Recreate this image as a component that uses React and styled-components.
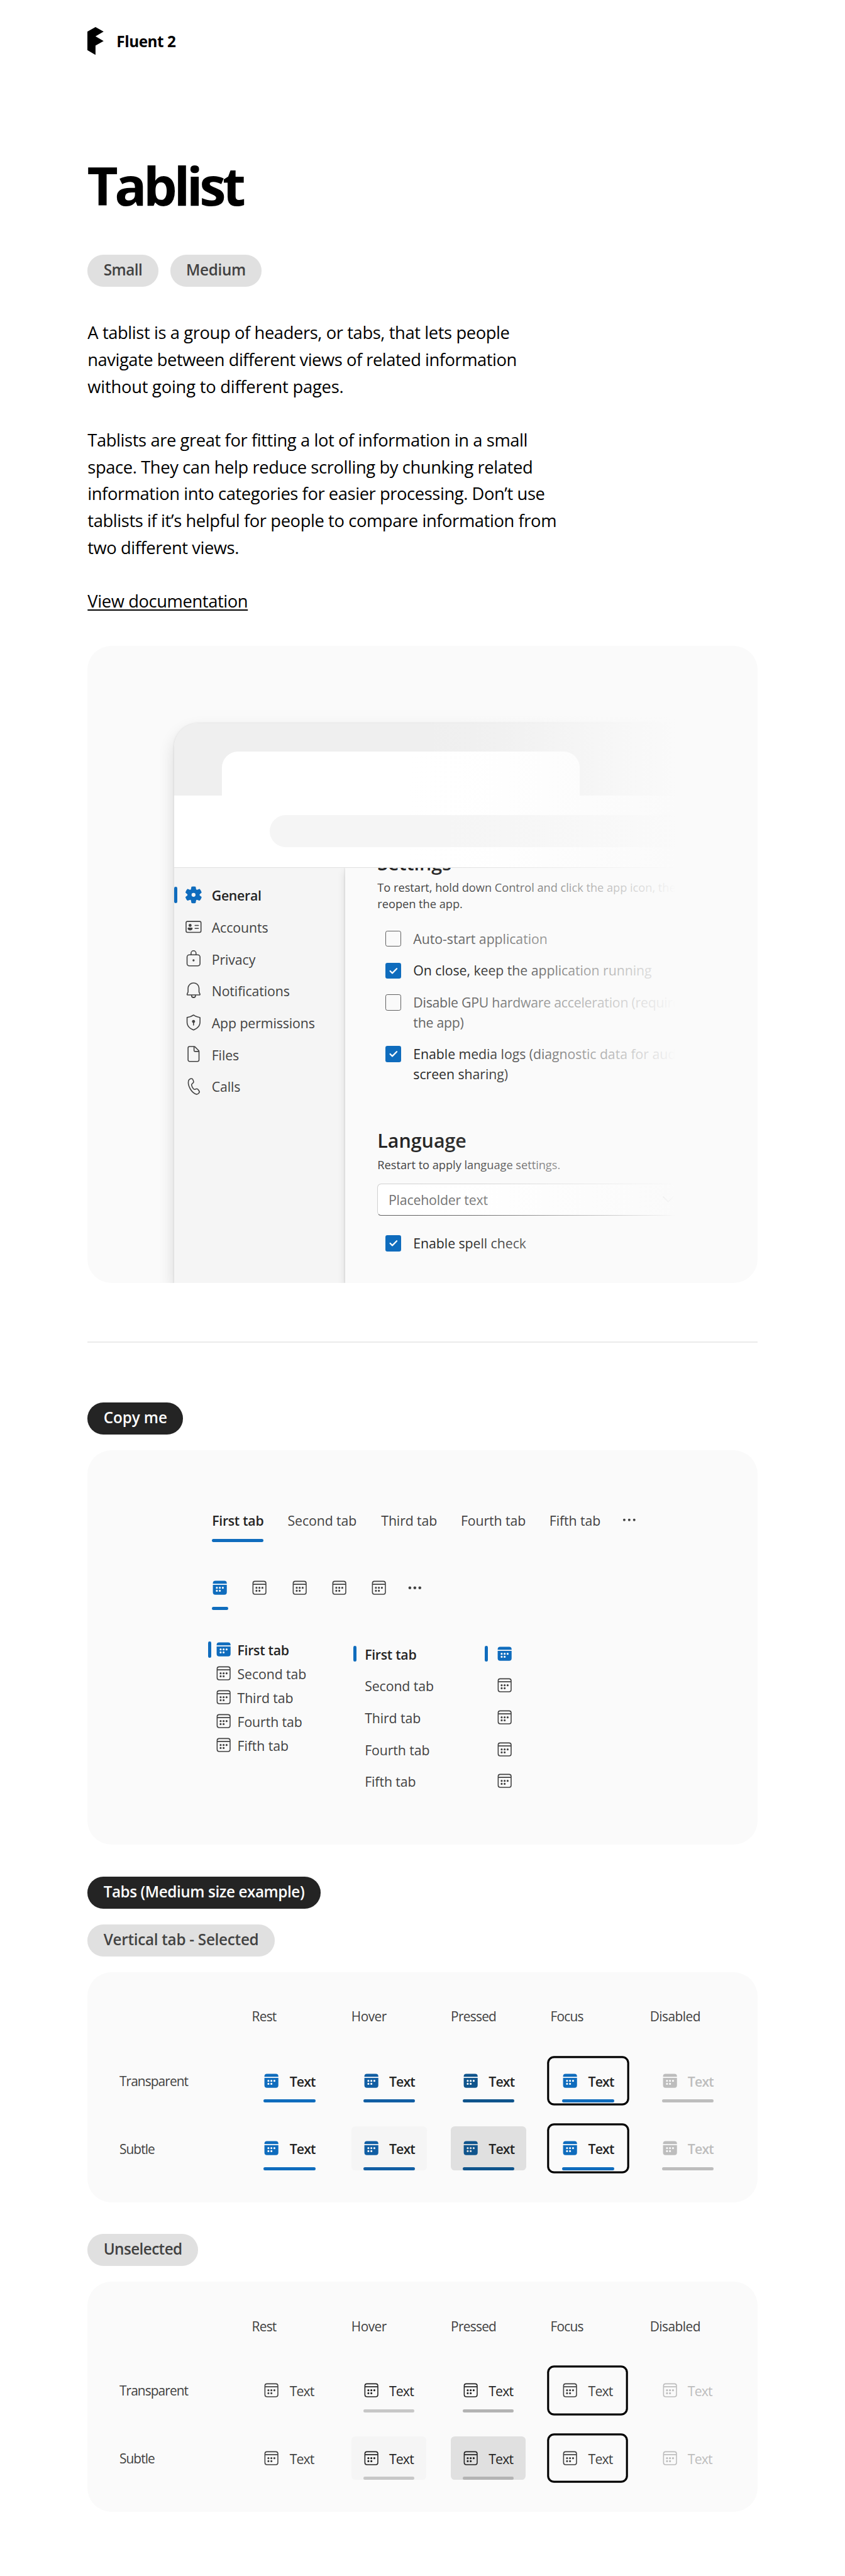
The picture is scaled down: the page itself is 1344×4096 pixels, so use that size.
import React from "react";
import styled, { createGlobalStyle, css } from "styled-components";

const SCALE = 1344 / 1698;
const u = (...n) => n.map((v) => `${+(v * SCALE).toFixed(3)}px`).join(" ");

const color = {
  brand: "#0f6cbd",
  brandHover: "#115ea3",
  brandPressed: "#0f548c",
  ink: "#242424",
  ink2: "#424242",
  ink3: "#616161",
  placeholder: "#707070",
  disabled: "#bdbdbd",
  canvas: "#fafafa",
  subtle: "#f5f5f5",
  pressed: "#e0e0e0",
};

const GlobalStyle = createGlobalStyle`
  *, *::before, *::after { box-sizing: border-box; }
  body {
    margin: 0;
    background: #fff;
    font-family: "Open Sans", "Noto Sans", sans-serif;
    color: #000;
  }
  h1, h2, p { margin: 0; }
  svg { display: block; flex: none; }
`;

const Page = styled.main`
  width: 1344px;
  height: 4096px;
  padding: ${u(54, 176, 0)};
  display: flex;
  flex-direction: column;
  align-items: flex-start;
  overflow: hidden;
`;

/* ---------- Header and introduction ---------- */

const Brand = styled.header`
  display: flex;
  align-items: center;
  gap: ${u(25.5)};
  height: ${u(56)};
`;

const BrandName = styled.span`
  padding-top: ${u(2)};
  font-size: ${u(30.7)};
  line-height: ${u(40)};
  font-weight: 700;
  letter-spacing: -0.018em;
`;

const Title = styled.h1`
  margin: ${u(202.3, 0, 79.7, -1)};
  font-size: ${u(107.5)};
  line-height: ${u(120)};
  font-weight: 700;
  letter-spacing: -0.065em;
`;

const PillRow = styled.div`
  display: flex;
  gap: ${u(24)};
  margin-bottom: ${u(65.9)};
`;

const Pill = styled.span`
  height: ${u(64)};
  padding: ${u(0, 32)};
  margin-top: ${(p) => u(p.$top ?? 0)};
  border-radius: ${u(32)};
  background: ${(p) => (p.$dark ? color.ink : color.pressed)};
  color: ${(p) => (p.$dark ? "#fff" : color.ink2)};
  font-size: ${u(30.7)};
  line-height: ${u(60)};
  font-weight: 600;
  letter-spacing: ${(p) => p.$track}em;
  white-space: nowrap;
`;

const Intro = styled.div`
  display: flex;
  flex-direction: column;
  align-items: flex-start;
  gap: ${u(54)};
  font-size: ${u(34.56)};
  line-height: ${u(54)};
  letter-spacing: -0.0147em;
  white-space: nowrap;
`;

const Line = styled.span`
  display: block;
  letter-spacing: ${(p) => p.$track ?? -0.0147}em;
`;

const DocLink = styled.a`
  color: #000;
  text-decoration: underline;
  text-decoration-thickness: ${u(2.4)};
  text-underline-offset: ${u(4)};
  text-decoration-skip-ink: none;
`;

/* ---------- Hero illustration ---------- */

const Card = styled.section`
  width: ${u(1346)};
  height: ${(p) => u(p.$height)};
  margin-top: ${(p) => u(p.$top)};
  border-radius: ${u(48)};
  background: ${color.canvas};
  flex: none;
`;

const Hero = styled(Card)`
  position: relative;
  display: flex;
  padding: ${u(155.5, 0, 0, 174)};
  overflow: hidden;
`;

const BrowserWindow = styled.div`
  width: ${u(1006)};
  display: flex;
  flex-direction: column;
  border-radius: ${u(48)} 0 0 0;
  overflow: hidden;
  box-shadow: 0 ${u(16)} ${u(32)} rgba(0, 0, 0, 0.14), 0 0 ${u(4)} rgba(0, 0, 0, 0.12);
`;

const FadeOut = styled.div`
  position: absolute;
  top: 0;
  bottom: 0;
  left: ${u(644)};
  width: ${u(616)};
  background: linear-gradient(
    to right,
    rgba(250, 250, 250, 0) 0,
    rgba(250, 250, 250, 0.07) ${u(120)},
    rgba(250, 250, 250, 0.22) ${u(206)},
    rgba(250, 250, 250, 0.48) ${u(310)},
    rgba(250, 250, 250, 0.64) ${u(380)},
    rgba(250, 250, 250, 0.8) ${u(455)},
    rgba(250, 250, 250, 0.92) ${u(510)},
    rgb(250, 250, 250) ${u(538)}
  );
`;

const TitleBar = styled.div`
  height: ${u(144.5)};
  padding: ${u(56.5, 0, 0, 96)};
  background: #efefef;
`;

const BrowserTab = styled.div`
  width: ${u(719.5)};
  height: 100%;
  border-radius: ${u(32, 32)} 0 0;
  background: #fff;
`;

const AddressBar = styled.div`
  height: ${u(146)};
  padding: ${u(40, 0, 0, 192)};
  background: #fff;
  border-bottom: ${u(2)} solid #e0e0e0;
`;

const AddressField = styled.div`
  height: ${u(64)};
  border-radius: ${u(32)} 0 0 ${u(32)};
  background: ${color.subtle};
`;

const WindowBody = styled.div`
  flex: 1;
  min-height: 0;
  display: flex;
  overflow: hidden;
`;

const Sidebar = styled.nav`
  width: ${u(343.5)};
  flex: none;
  padding-top: ${u(22)};
  background: ${color.subtle};
`;

const NavItem = styled.div`
  height: ${u(64)};
  display: flex;
  align-items: center;
  color: ${color.ink2};
`;

const SideMark = styled.span`
  width: ${u(6)};
  height: ${u(32)};
  flex: none;
  border-radius: ${u(3)};
  background: ${(p) => (p.$on ? color.brand : "transparent")};
`;

const NavIcon = styled.span`
  margin: ${u(0, 16, 0, 13.5)};
  color: ${(p) => (p.$on ? color.brand : color.ink2)};
`;

const Label = styled.span`
  padding-top: ${u(3)};
  font-size: ${u(26.88)};
  line-height: ${u(40)};
  white-space: nowrap;
  ${(p) =>
    p.$strong
      ? css`
          font-weight: 600;
          letter-spacing: -0.013em;
          color: ${color.ink};
        `
      : css`
          letter-spacing: -0.004em;
          color: ${color.ink2};
        `}
`;

const SettingsPane = styled.div`
  position: relative;
  flex: 1;
  min-width: 0;
  padding-left: ${u(65)};
  background: ${color.canvas};
  box-shadow: 0 0 ${u(4)} rgba(0, 0, 0, 0.14), 0 ${u(8)} ${u(16)} rgba(0, 0, 0, 0.12);
  white-space: nowrap;
`;

const Heading = styled.h2`
  margin: ${(p) => u(p.$top, 0, 4.9)};
  font-size: ${u(38.4)};
  line-height: ${u(56)};
  font-weight: 600;
  color: ${color.ink};
`;

const Caption = styled.p`
  font-size: ${u(23.04)};
  line-height: ${u(32)};
  letter-spacing: -0.001em;
  color: ${color.ink2};
`;

const CheckList = styled.div`
  display: flex;
  flex-direction: column;
  gap: ${u(24)};
  margin: ${(p) => u(p.$top, 0, 0, 16)};
`;

const CheckRow = styled.div`
  display: flex;
  align-items: flex-start;
  gap: ${u(24)};
  font-size: ${u(26.88)};
  line-height: ${u(40)};
  letter-spacing: ${(p) => p.$track ?? -0.002}em;
  color: ${(p) => (p.$checked ? color.ink : color.ink3)};
`;

const CheckBox = styled.span`
  width: ${u(32)};
  height: ${u(32)};
  flex: none;
  margin-top: ${u(4)};
  border-radius: ${u(4)};
  ${(p) =>
    p.$checked
      ? css`
          background: ${color.brand};
        `
      : css`
          border: ${u(2)} solid ${color.ink3};
        `}
`;

const Dropdown = styled.div`
  width: ${u(640)};
  height: ${u(64)};
  margin-top: ${u(21.2)};
  padding: ${u(0, 35, 0, 21)};
  display: flex;
  align-items: center;
  justify-content: space-between;
  border: ${u(2)} solid #d1d1d1;
  border-bottom-color: ${color.ink3};
  border-radius: ${u(8)};
  background: #fff;
  font-size: ${u(26.88)};
  letter-spacing: -0.008em;
  color: ${color.placeholder};
`;

const Divider = styled.hr`
  width: ${u(1346)};
  height: 2px;
  margin: ${u(117.5, 0, 0)};
  border: 0;
  flex: none;
  background: #ebebeb;
`;

/* ---------- Tablist samples ---------- */

const Samples = styled(Card)`
  padding: ${u(121.2, 0, 0, 250)};
`;

const TabRow = styled.div`
  display: flex;
  align-items: flex-start;
  gap: ${u(48)};
  margin-top: ${(p) => u(p.$top ?? 0)};
`;

const HTab = styled.div`
  width: ${(p) => u(p.$width)};
  display: flex;
  flex-direction: column;
  align-items: stretch;
  gap: ${(p) => u(p.$gap)};
`;

const TabLabel = styled(Label)`
  padding-top: 0;
`;

const UnderMark = styled.span`
  height: ${u(6)};
  border-radius: ${u(3)};
  background: ${(p) => p.$fill ?? "transparent"};
`;

const Overflow = styled.span`
  margin: ${(p) => u(p.$shift, 0, 0, -12)};
  color: ${color.ink2};
`;

const VerticalLists = styled.div`
  display: grid;
  grid-template-columns: ${u(292, 264)} auto;
  align-items: start;
  margin: ${u(56, 0, 0, -8)};
`;

const VTab = styled.div`
  height: ${(p) => u(p.$height)};
  display: flex;
  align-items: center;
`;

const VIcon = styled.span`
  margin-left: ${(p) => u(p.$gap)};
  color: ${(p) => (p.$on ? color.brand : color.ink2)};
`;

const VLabel = styled(Label)`
  margin-left: ${(p) => u(p.$gap)};
`;

/* ---------- State matrices ---------- */

const Matrix = styled(Card)`
  display: grid;
  grid-template-columns: ${u(266, 200, 200, 200, 200, 200)};
  grid-template-rows: ${u(104, 136, 136)};
  padding: ${u(70, 0, 0, 64)};
`;

const MatrixText = styled.span`
  font-size: ${u(26.4)};
  line-height: ${u(40)};
  letter-spacing: ${(p) => p.$track ?? -0.035}em;
  color: ${color.ink2};
`;

const RowName = styled(MatrixText)`
  height: ${u(88)};
  padding-top: ${u(25.7)};
  letter-spacing: -0.044em;
`;

const StateTab = styled.div`
  width: ${(p) => u(p.$selected ? 152 : 150)};
  height: ${u(88)};
  padding: ${u(6, 24, 0)};
  display: flex;
  flex-direction: column;
  border-radius: ${u(8)};
  background: ${(p) => p.$bg};
  color: ${(p) => p.$text};
  ${(p) =>
    p.$focus &&
    css`
      box-shadow: 0 0 0 ${u(2)} #fff, 0 0 0 ${u(6)} #000;
    `}
`;

const StateContent = styled.div`
  flex: 1;
  display: flex;
  align-items: center;
  gap: ${u(20)};
`;

const StateIcon = styled.span`
  color: ${(p) => p.$color};
`;

const StateLabel = styled.span`
  padding-top: ${u(3)};
  font-size: ${u(26.88)};
  line-height: ${u(40)};
  font-weight: ${(p) => (p.$selected ? 600 : 400)};
  letter-spacing: -0.04em;
`;

/* ---------- Icons ---------- */

const Svg = ({ size = 40, box = "0 0 20 20", children, ...rest }) => (
  <svg width={size * SCALE} height={size * SCALE} viewBox={box} fill="currentColor" {...rest}>
    {children}
  </svg>
);

const Logo = () => (
  <svg width={32.6 * SCALE} height={56 * SCALE} viewBox="0 0 32.6 56">
    <path d="M0 9.3 16.3 0l16.3 9.3-16.3 9.3L32.6 28l-16.3 9.3V56L0 46.6Z" />
  </svg>
);

const calendarDots =
  "M8 10a1 1 0 1 1-2 0 1 1 0 0 1 2 0ZM11 10a1 1 0 1 1-2 0 1 1 0 0 1 2 0ZM14 10a1 1 0 1 1-2 0 1 1 0 0 1 2 0ZM8 13a1 1 0 1 1-2 0 1 1 0 0 1 2 0ZM11 13a1 1 0 1 1-2 0 1 1 0 0 1 2 0Z";

const Calendar = ({ filled }) => (
  <Svg size={32} box="2 2 16 16">
    {filled ? (
      <path
        fillRule="evenodd"
        d={`M3 7h14v7.5a2.5 2.5 0 0 1-2.5 2.5h-9A2.5 2.5 0 0 1 3 14.5V7ZM5.5 3h9A2.5 2.5 0 0 1 17 5.5V6H3v-.5A2.5 2.5 0 0 1 5.5 3Z${calendarDots}`}
      />
    ) : (
      <>
        <path d={calendarDots} />
        <path
          fillRule="evenodd"
          d="M17 5.5A2.5 2.5 0 0 0 14.5 3h-9A2.5 2.5 0 0 0 3 5.5v9A2.5 2.5 0 0 0 5.5 17h9a2.5 2.5 0 0 0 2.5-2.5v-9ZM4 7h12v7.5c0 .83-.67 1.5-1.5 1.5h-9A1.5 1.5 0 0 1 4 14.5V7Zm1.5-3h9c.83 0 1.5.67 1.5 1.5V6H4v-.5C4 4.67 4.67 4 5.5 4Z"
        />
      </>
    )}
  </Svg>
);

const More = ({ r = 1.25 }) => (
  <Svg>
    <circle cx="5" cy="10" r={r} />
    <circle cx="10" cy="10" r={r} />
    <circle cx="15" cy="10" r={r} />
  </Svg>
);

const icons = {
  gear: (
    <path
      fillRule="evenodd"
      d="M1.91 7.38A8.5 8.5 0 0 1 3.69 4.3a.5.5 0 0 1 .54-.13l1.92.68a1 1 0 0 0 1.32-.76l.36-2a.5.5 0 0 1 .4-.4 8.53 8.53 0 0 1 3.55 0c.2.04.35.2.38.4l.37 2a1 1 0 0 0 1.32.76l1.92-.68a.5.5 0 0 1 .54.13 8.5 8.5 0 0 1 1.78 3.08c.06.2 0 .4-.15.54l-1.56 1.32a1 1 0 0 0 0 1.52l1.56 1.32a.5.5 0 0 1 .15.54 8.5 8.5 0 0 1-1.78 3.08.5.5 0 0 1-.54.13l-1.92-.68a1 1 0 0 0-1.32.76l-.37 2a.5.5 0 0 1-.38.4 8.53 8.53 0 0 1-3.56 0 .5.5 0 0 1-.39-.4l-.36-2a1 1 0 0 0-1.32-.76l-1.92.68a.5.5 0 0 1-.54-.13 8.5 8.5 0 0 1-1.78-3.08.5.5 0 0 1 .15-.54l1.56-1.32a1 1 0 0 0 0-1.52L2.06 7.92a.5.5 0 0 1-.15-.54ZM8 10a2 2 0 1 0 4 0 2 2 0 0 0-4 0Z"
    />
  ),
  card: (
    <>
      <rect x="2.5" y="4.5" width="15" height="11" rx="1.4" fill="none" stroke="currentColor" />
      <circle cx="6.55" cy="8.5" r="1.5" />
      <path d="M4.9 10.8h3.3c.45 0 .8.35.8.8 0 1.2-1 1.95-2.45 1.95S4.1 12.8 4.1 11.6c0-.45.35-.8.8-.8Z" />
      <path d="M11.5 8.5h3.4M11.5 11.5h3.4" stroke="currentColor" strokeLinecap="round" />
    </>
  ),
  lock: (
    <>
      <rect x="3.5" y="6.5" width="13" height="11" rx="2.2" fill="none" stroke="currentColor" />
      <path d="M7.5 6.3V4.9a2.5 2.5 0 0 1 5 0v1.4" fill="none" stroke="currentColor" />
      <circle cx="10" cy="12" r="1.05" />
    </>
  ),
  bell: (
    <path
      fillRule="evenodd"
      d="M10 2a5.92 5.92 0 0 1 5.98 5.36l.02.22V11.4l.92 2.22a1 1 0 0 1 .06.17l.01.08.01.13a1 1 0 0 1-.75.97l-.11.02L16 15h-3.5v.17a2.5 2.5 0 0 1-5 0V15H4a1 1 0 0 1-.26-.03l-.13-.04a1 1 0 0 1-.6-1.05l.02-.13.05-.13L4 11.4V7.57A5.9 5.9 0 0 1 10 2Zm1.5 13h-3v.15a1.5 1.5 0 0 0 1.36 1.34l.14.01c.78 0 1.42-.6 1.5-1.36V15ZM10 3a4.9 4.9 0 0 0-4.98 4.38L5 7.6v3.9l-.04.2L4 14h12l-.96-2.3-.04-.2V7.61A4.9 4.9 0 0 0 10 3Z"
    />
  ),
  shield: (
    <>
      <path
        fillRule="evenodd"
        d="M9.72 2.08a.5.5 0 0 1 .56 0c1.94 1.3 4.03 2.1 6.3 2.43A.5.5 0 0 1 17 5v4.5c0 3.9-2.3 6.73-6.82 8.47a.5.5 0 0 1-.36 0C5.31 16.23 3 13.39 3 9.5V5a.5.5 0 0 1 .43-.5 15.05 15.05 0 0 0 6.3-2.42ZM10 3.1a15.92 15.92 0 0 1-6 2.34V9.5c0 3.4 1.97 5.86 6 7.46 4.03-1.6 6-4.07 6-7.46V5.43a15.92 15.92 0 0 1-6-2.34Z"
      />
      <circle cx="10" cy="9" r="1.5" />
      <path d="M10 9.5v3.1" stroke="currentColor" strokeLinecap="round" />
    </>
  ),
  file: (
    <path
      fillRule="evenodd"
      d="M6 2a2 2 0 0 0-2 2v12c0 1.1.9 2 2 2h8a2 2 0 0 0 2-2V7.41c0-.4-.16-.78-.44-1.06l-3.91-3.91A1.5 1.5 0 0 0 10.59 2H6ZM5 4a1 1 0 0 1 1-1h4v3.5c0 .83.67 1.5 1.5 1.5H15v8a1 1 0 0 1-1 1H6a1 1 0 0 1-1-1V4Zm9.8 3h-3.3a.5.5 0 0 1-.5-.5V3.2L14.8 7Z"
    />
  ),
  call: (
    <path
      fill="none"
      stroke="currentColor"
      strokeLinejoin="round"
      d="m6.6 2.8.6-.18a1.75 1.75 0 0 1 2.15.98l.6 1.42a1.7 1.7 0 0 1-.42 1.9L8.3 8.06c-.2.2-.32.48-.28.76.1.84.4 1.72.92 2.62.46.8.94 1.36 1.5 1.82.2.16.46.2.7.13l1.55-.5a1.7 1.7 0 0 1 1.9.66l.92 1.28a1.75 1.75 0 0 1-.22 2.28l-.44.42c-.66.62-1.6.84-2.46.56-2.12-.7-4.1-2.46-5.74-5.3C5.02 9.94 4.42 7.4 4.86 5.16A3 3 0 0 1 6.6 2.8Z"
    />
  ),
};

const CheckMark = () => (
  <Svg size={32} box="0 0 32 32">
    <path d="m9.6 16.4 4.3 4.3 8.9-9" fill="none" stroke="#fff" strokeWidth="2.8" strokeLinecap="round" strokeLinejoin="round" />
  </Svg>
);

/* ---------- Data ---------- */

const navItems = [
  ["General", "gear"],
  ["Accounts", "card"],
  ["Privacy", "lock"],
  ["Notifications", "bell"],
  ["App permissions", "shield"],
  ["Files", "file"],
  ["Calls", "call"],
];

const tabs = [
  ["First tab", 104],
  ["Second tab", 140],
  ["Third tab", 112],
  ["Fourth tab", 130],
  ["Fifth tab", 104],
];

const states = [
  { name: "Rest", mark: color.brand, idleMark: "transparent", text: color.ink2 },
  { name: "Hover", mark: color.brandHover, idleMark: "#c7c7c7", text: color.ink, bg: color.subtle },
  { name: "Pressed", mark: color.brandPressed, idleMark: "#b3b3b3", text: color.ink, bg: color.pressed },
  { name: "Focus", mark: color.brand, idleMark: "transparent", text: color.ink2, focus: true },
  { name: "Disabled", mark: color.disabled, idleMark: "transparent", text: color.disabled, disabled: true },
];

/* ---------- Sections ---------- */

const Check = ({ checked, track, children }) => (
  <CheckRow $checked={checked} $track={track}>
    <CheckBox $checked={checked}>{checked && <CheckMark />}</CheckBox>
    <span>{children}</span>
  </CheckRow>
);

const HeroCard = () => (
  <Hero $top={62.1} $height={1280}>
    <BrowserWindow>
      <TitleBar>
        <BrowserTab />
      </TitleBar>
      <AddressBar>
        <AddressField />
      </AddressBar>
      <WindowBody>
        <Sidebar>
          {navItems.map(([label, icon], i) => (
            <NavItem key={label}>
              <SideMark $on={i === 0} />
              <NavIcon $on={i === 0}>
                <Svg>{icons[icon]}</Svg>
              </NavIcon>
              <Label $strong={i === 0}>{label}</Label>
            </NavItem>
          ))}
        </Sidebar>
        <SettingsPane>
          <Heading $top={-36.6}>Settings</Heading>
          <Caption>
            To restart, hold down Control and click the app icon, then
            <br />
            reopen the app.
          </Caption>
          <CheckList $top={33.6}>
            <Check>Auto-start application</Check>
            <Check checked>On close, keep the application running</Check>
            <Check track={-0.011}>
              Disable GPU hardware acceleration (requires
              <br />
              the app)
            </Check>
            <Check checked>
              Enable media logs (diagnostic data for audio
              <br />
              screen sharing)
            </Check>
          </CheckList>
          <Heading $top={86}>Language</Heading>
          <Caption>Restart to apply language settings.</Caption>
          <Dropdown>
            Placeholder text
            <Svg>
              <path d="m5 7.6 5 5 5-5" fill="none" stroke={color.ink3} strokeLinecap="round" strokeLinejoin="round" />
            </Svg>
          </Dropdown>
          <CheckList $top={36}>
            <Check checked>Enable spell check</Check>
          </CheckList>
        </SettingsPane>
      </WindowBody>
    </BrowserWindow>
    <FadeOut />
  </Hero>
);

const SampleCard = () => (
  <Samples $top={32} $height={792}>
    <TabRow>
      {tabs.map(([label, width], i) => (
        <HTab key={label} $width={width} $gap={16.8}>
          <TabLabel $strong={i === 0}>{label}</TabLabel>
          <UnderMark $fill={i === 0 ? color.brand : undefined} />
        </HTab>
      ))}
      <Overflow $shift={-1}>
        <More />
      </Overflow>
    </TabRow>
    <TabRow $top={76}>
      {tabs.map(([label], i) => (
        <HTab key={label} $width={32} $gap={22}>
          <VIcon $gap={0} $on={i === 0}>
            <Calendar filled={i === 0} />
          </VIcon>
          <UnderMark $fill={i === 0 ? color.brand : undefined} />
        </HTab>
      ))}
      <Overflow $shift={-4}>
        <More r={1.45} />
      </Overflow>
    </TabRow>
    <VerticalLists>
      <div>
        {tabs.map(([label], i) => (
          <VTab key={label} $height={48}>
            <SideMark $on={i === 0} />
            <VIcon $gap={10} $on={i === 0}>
              <Calendar filled={i === 0} />
            </VIcon>
            <VLabel $gap={11} $strong={i === 0}>
              {label}
            </VLabel>
          </VTab>
        ))}
      </div>
      <div>
        {tabs.map(([label], i) => (
          <VTab key={label} $height={64}>
            <SideMark $on={i === 0} />
            <VLabel $gap={17} $strong={i === 0}>
              {label}
            </VLabel>
          </VTab>
        ))}
      </div>
      <div>
        {tabs.map(([label], i) => (
          <VTab key={label} $height={64}>
            <SideMark $on={i === 0} />
            <VIcon $gap={18} $on={i === 0}>
              <Calendar filled={i === 0} />
            </VIcon>
          </VTab>
        ))}
      </div>
    </VerticalLists>
  </Samples>
);

const StateMatrix = ({ selected }) => (
  <Matrix $top={32} $height={462}>
    <span />
    {states.map((s) => (
      <MatrixText key={s.name} $track={s.name === "Disabled" || s.name === "Hover" ? -0.025 : undefined}>
        {s.name}
      </MatrixText>
    ))}
    {["Transparent", "Subtle"].map((row) => (
      <React.Fragment key={row}>
        <RowName>{row}</RowName>
        {states.map((s) => (
          <StateTab
            key={s.name}
            $selected={selected}
            $focus={s.focus}
            $bg={row === "Subtle" && s.bg ? s.bg : color.canvas}
            $text={selected && !s.disabled ? color.ink : s.text}
          >
            <StateContent>
              <StateIcon $color={selected ? s.mark : s.text}>
                <Calendar filled={selected} />
              </StateIcon>
              <StateLabel $selected={selected}>Text</StateLabel>
            </StateContent>
            <UnderMark $fill={selected ? s.mark : s.idleMark} />
          </StateTab>
        ))}
      </React.Fragment>
    ))}
  </Matrix>
);

export default function App() {
  return (
    <>
      <GlobalStyle />
      <Page>
        <Brand>
          <Logo />
          <BrandName>Fluent 2</BrandName>
        </Brand>
        <Title>Tablist</Title>
        <PillRow>
          <Pill $track={-0.02}>Small</Pill>
          <Pill $track={-0.0136}>Medium</Pill>
        </PillRow>
        <Intro>
          <p>
            <Line>A tablist is a group of headers, or tabs, that lets people</Line>
            <Line $track={-0.0172}>navigate between different views of related information</Line>
            <Line $track={-0.0085}>without going to different pages.</Line>
          </p>
          <p>
            <Line>Tablists are great for fitting a lot of information in a small</Line>
            <Line>space. They can help reduce scrolling by chunking related</Line>
            <Line $track={-0.0155}>information into categories for easier processing. Don’t use</Line>
            <Line>tablists if it’s helpful for people to compare information from</Line>
            <Line $track={-0.016}>two different views.</Line>
          </p>
          <DocLink>View documentation</DocLink>
        </Intro>
        <HeroCard />
        <Divider />
        <Pill $dark $top={120} $track={-0.004}>
          Copy me
        </Pill>
        <SampleCard />
        <Pill $dark $top={64} $track={-0.0178}>
          Tabs (Medium size example)
        </Pill>
        <Pill $top={32} $track={-0.0119}>
          Vertical tab - Selected
        </Pill>
        <StateMatrix selected />
        <Pill $top={64} $track={-0.0244}>
          Unselected
        </Pill>
        <StateMatrix selected={false} />
      </Page>
    </>
  );
}
